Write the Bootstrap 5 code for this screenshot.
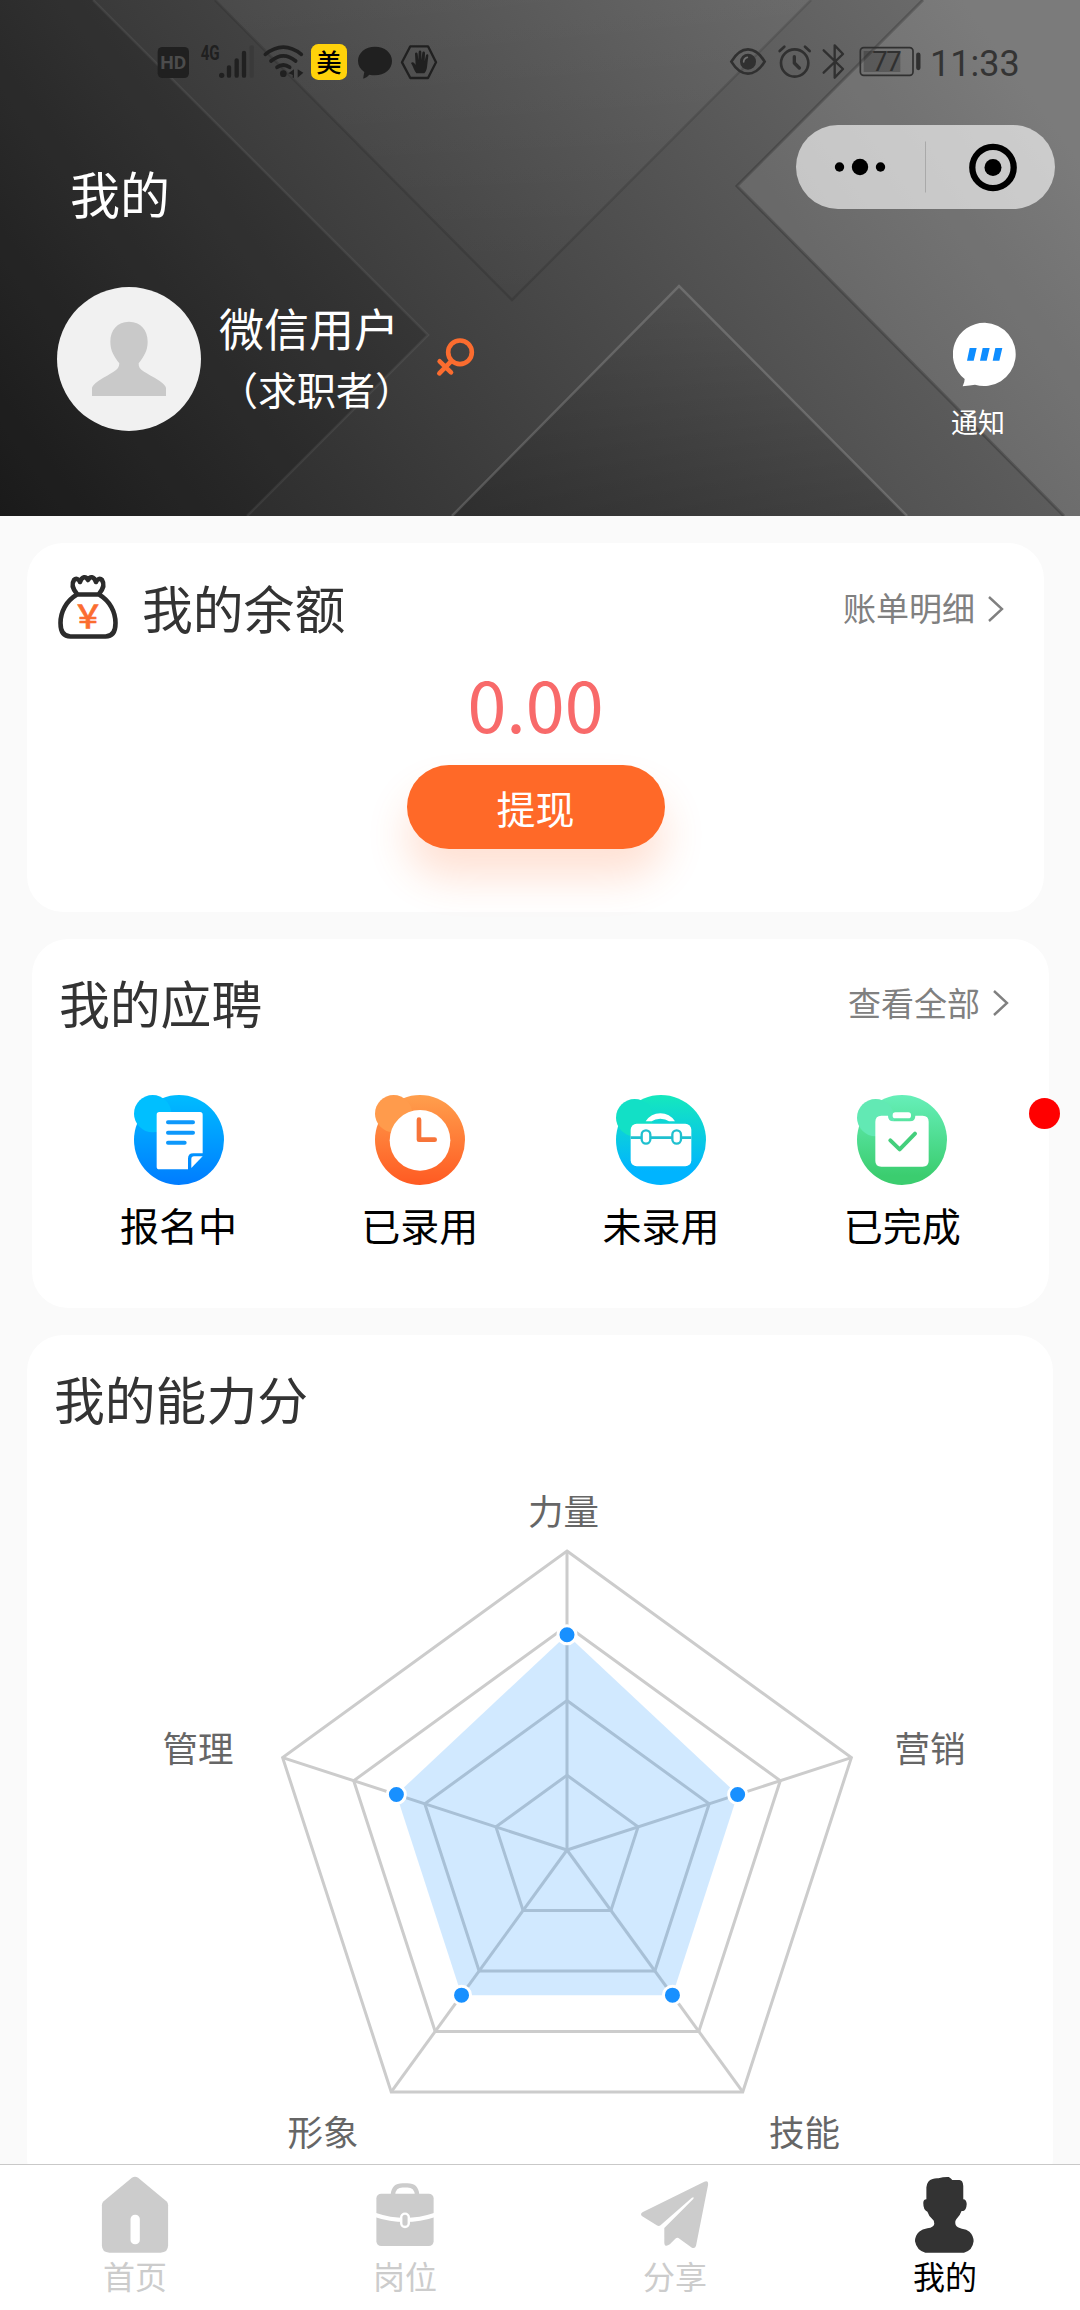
<!DOCTYPE html>
<html lang="zh-CN">
<head>
<meta charset="utf-8">
<meta name="viewport" content="width=device-width, initial-scale=1">
<title>我的</title>
<link href="https://cdn.jsdelivr.net/npm/bootstrap@5.3.0/dist/css/bootstrap.min.css" rel="stylesheet">
<style>
  body{font-family:"Noto Sans CJK SC",sans-serif;background:#fafafa;line-height:1;color:#333}
  svg{display:block;flex:none}
  .screen{height:2310px}
  .hero{height:516px;color:#fff;background:#444}
  .hero-bg{z-index:0}
  .hero-in{z-index:1}
  .status{height:100px;padding:30px 0 0 140px}
  .clock{font:36px/1 Roboto,sans-serif;color:#343434;margin:16px 0 0 0;width:150px}
  .topline{height:187px;padding:25px 25px 0 70px}
  .page-name{font-size:50px;padding-top:42px}
  .capsule{width:259px;height:84px;background:rgba(255,255,255,.62)}
  .profile{padding:0 62px 0 57px;height:144px}
  .user{margin-left:18px;padding-top:18px}
  .nick{font-size:45px}
  .role{font-size:39px;margin-top:19px}
  .sex{margin:49px 0 0 21px}
  .notice{padding-top:35px;font-size:27px}
  .notice svg{margin-right:-1px}
  .notice span{margin-top:20px;margin-right:13px}
  .panel{background:#fff;border:0;border-radius:36px;height:369px}
  .p-balance{margin:27px 36px 0 27px;padding:30px 40px 0 29px}
  .p-apply{margin:27px 31px 0 32px;padding:38px 40px 0 27px}
  .p-score{margin:27px 27px 0 27px;padding:38px 0 0 27px;height:860px}
  .heading{font-size:50.8px;color:#333}
  .p-balance .heading{margin:-2px 0 0 22px}
  .more{font-size:33px;color:#808080}
  .p-balance .more{margin-top:-2px}
  .chev{margin:1px 0 0 12px}
  .amount{font-size:70px;color:#f86a6a;margin-top:25px}
  .draw{width:258px;height:84px;font-size:39px;line-height:83px;background:#ff6928;color:#fff;border:0;margin-top:27px;padding:0;box-shadow:0 28px 42px rgba(255,105,40,.2)}
  .draw:hover{background:#ff6928;color:#fff}
  .states{margin:67px -14px 0 -1px;font-size:39px;color:#000}
  .states span{margin-top:20px}
  .dot{width:31px;height:31px;background:#f00;right:-11px;top:159px}
  .radar{font-size:35.5px;fill:#666;margin:34px 0 0 -27px}
  .tabs{height:146px;background:#fff;border-top:1px solid #c9c9c9;font-size:32px;color:#ccc;z-index:2}
  .tabs a{color:#ccc;padding-top:11px}
  .tabs a span{margin-top:3px}
  .tabs a.on{color:#000}
</style>
</head>
<body>
<div class="screen d-flex flex-column overflow-hidden position-relative">
  <header class="hero position-relative flex-shrink-0">
    <svg class="hero-bg position-absolute top-0 start-0" width="1080" height="516" viewBox="0 0 1080 516">
      <defs>
        <linearGradient id="g0" gradientUnits="userSpaceOnUse" x1="0" y1="516" x2="876" y2="-120"><stop offset="0" stop-color="#1f1f1f"/><stop offset="1" stop-color="#6c6c6c"/></linearGradient>
        <linearGradient id="g3" gradientUnits="userSpaceOnUse" x1="0" y1="516" x2="0" y2="286"><stop offset="0" stop-color="#000" stop-opacity=".2"/><stop offset="1" stop-color="#000" stop-opacity="0"/></linearGradient>
        <linearGradient id="g4" gradientUnits="userSpaceOnUse" x1="0" y1="0" x2="0" y2="300"><stop offset="0" stop-color="#fff" stop-opacity=".05"/><stop offset="1" stop-color="#fff" stop-opacity="0"/></linearGradient>
      </defs>
      <path fill="url(#g0)" d="M0 0H1080V516H0z"/>
      <path fill="#000" fill-opacity=".14" d="M0 0H93L428 335 247 516H0z"/>
      <path fill="url(#g4)" d="M215 0L512 300 811 0z"/>
      <path fill="url(#g3)" d="M452 516L679 286 907 516z"/>
      <path fill="#fff" fill-opacity=".1" d="M923 0L737 186 1064 516H1080V0z"/>
      <g fill="none" stroke-width="2.500">
        <path stroke="#fff" stroke-opacity=".07" d="M93 0L428 335 247 516"/>
        <path stroke="#000" stroke-opacity=".12" d="M215 0L512 300 811 0"/>
        <path stroke="#000" stroke-opacity=".2" stroke-width="3" d="M923 0L737 186 1064 516"/>
        <path stroke="#fff" stroke-opacity=".17" d="M452 516L679 286 907 516"/>
      </g>
    </svg>
    <div class="hero-in position-relative">
      <div class="status d-flex">
        <svg width="320" height="70" viewBox="0 0 960 210" fill="#202020">
          <rect x="53" y="51" width="94" height="93" rx="14"/>
          <text x="100" y="118" font-family="Roboto" font-weight="700" font-size="56" text-anchor="middle" fill="#4c4c4c" textLength="78" lengthAdjust="spacingAndGlyphs">HD</text>
          <text x="182" y="89" font-family="Roboto" font-weight="700" font-size="58" textLength="57" lengthAdjust="spacingAndGlyphs">4G</text>
          <circle cx="245" cy="136" r="8"/>
          <g stroke="#202020" stroke-width="13" stroke-linecap="round" fill="none">
            <path d="M267 112V137M290 91V137M312 69V137"/><path stroke="#3a3a3a" d="M335 52V137"/>
            <path stroke-width="11" d="M376 73Q430 30 484 73M393 93Q430 62 467 93M411 112Q430 98 449 112"/>
          </g>
          <circle cx="430" cy="131" r="10"/><path d="M462 118v25h-4v-8l-13-5zM473 118v25l17-15z"/>
          <rect x="513" y="42" width="108" height="108" rx="22" fill="#ffd20a"/>
          <text x="567" y="125" font-family="Noto Sans CJK SC" font-weight="500" font-size="76" text-anchor="middle" fill="#000">美</text>
          <path d="M705 50c29 0 51 18 51 43s-22 43-51 43q-9 0-17-2-7 9-18 12-1-2 3-20c-12-8-19-19-19-33 0-25 22-43 51-43z"/>
          <path fill="none" stroke="#202020" stroke-width="7" stroke-linejoin="round" d="M811 49h53l24 48-24 47h-53l-25-47z"/>
          <path d="M829 130c-7-8-9-20-16-31 6-6 11 1 14 6l-2-33c0-6 7-6 8 0l2 19 1-25c1-6 7-6 8 0v25l3-23c1-5 8-5 8 1l-1 25 4-18c2-5 7-4 7 1l-4 35c-1 9-5 15-8 18z"/>
        </svg>
        <svg class="ms-auto me-0" width="220" height="70" viewBox="0 0 660 210" fill="none" stroke="#303030">
          <path stroke-width="8" d="M64 95Q86 58 114 58T164 95Q142 131 114 131T64 95z"/>
          <circle cx="114" cy="95" r="24" fill="#303030" stroke="none"/><path stroke="#707070" stroke-width="5" stroke-linecap="round" d="M101 96q0-11 11-14"/>
          <circle cx="254" cy="99" r="41" stroke-width="8"/>
          <path stroke-width="8" stroke-linecap="round" d="M209 63l14-13M299 63l-14-13"/><path stroke-width="10" stroke-linecap="round" stroke-linejoin="round" d="M253 80v19l15 15"/>
          <path stroke-width="7" stroke-linejoin="round" stroke-linecap="round" d="M341 61l58 56-25 26V46l25 26-58 56"/>
          <rect x="451" y="53" width="158" height="83" rx="10" stroke-width="5"/>
          <path fill="#000" fill-opacity=".22" stroke="none" d="M461 63h110v63H461z"/>
          <text x="531" y="124" fill="#303030" stroke="none" font-family="Roboto" font-size="82" text-anchor="middle" textLength="88">77</text>
          <path stroke-width="13" stroke-linecap="round" d="M625 74v40"/>
        </svg>
        <div class="clock">11:33</div>
      </div>
      <div class="topline d-flex justify-content-between align-items-start">
        <div class="page-name">我的</div>
        <div class="capsule rounded-pill">
          <svg width="259" height="84" viewBox="0 0 259 84">
            <circle cx="43.500" cy="42" r="4.700"/><circle cx="64" cy="42" r="8.200"/><circle cx="84.500" cy="42" r="4.700"/>
            <path stroke="#a9a9a9" d="M129.500 16.500v51"/>
            <circle cx="197" cy="42.500" r="20.700" fill="none" stroke="#000" stroke-width="6.300"/><circle cx="197" cy="42.500" r="8.500"/>
          </svg>
        </div>
      </div>
      <div class="profile d-flex align-items-start">
        <svg width="144" height="144" viewBox="81 51 432 432">
          <circle cx="297" cy="267" r="216" fill="#f1f1f1"/>
          <path fill="#c9c9c9" d="M297 155c35 0 56 25 56 60 0 28-12 45-27 65-2 22 22 27 62 52q20 14 20 22v24H186v-24q0-8 20-22c40-25 62-30 62-52-15-20-27-37-27-65 0-35 21-60 56-60z"/>
        </svg>
        <div class="user d-flex flex-column">
          <span class="nick">微信用户</span><span class="role">（求职者）</span>
        </div>
        <svg class="sex" width="42" height="42" viewBox="1215 200 126 126" fill="none" stroke="#fb6c2f" stroke-width="14" stroke-linecap="round">
          <circle cx="1290" cy="249" r="35.500"/><path d="M1263 276l-35 36M1229 276l34 33"/>
        </svg>
        <div class="notice ms-auto d-flex flex-column align-items-center">
          <svg width="64" height="66" viewBox="161 66 192 198">
            <path fill="#fff" d="M257 68a95 95 0 1 1-30 186q-14 2-37 5 6-12 6-22A95 95 0 0 1 257 68z"/>
            <path fill="#0e8dff" d="M211 144h21l-9 38h-20zM250 144h21l-9 38h-20zM288 144h21l-9 38h-20z"/>
          </svg>
          <span>通知</span>
        </div>
      </div>
    </div>
  </header>

  <section class="card panel p-balance flex-shrink-0">
    <div class="d-flex align-items-center">
      <svg width="64" height="70" viewBox="56 572 64 70" fill="none" stroke="#2b2b2b" stroke-width="4.600" stroke-linejoin="round">
        <path d="M77 593.500C66 600 60.500 611 60.500 622c0 9 3 13.500 10 13.500h35c7 0 10-4.500 10-13.500 0-11-5.500-22-16.500-28.500z"/>
        <path d="M77 593c-5-6-5-11-3-14 2-2 5-1 6 2 2-6 6-6 8-2 2-4 6-4 8 2 1-3 4-4 6-2 2 3 2 8-3 14"/>
        <text x="88" y="627" font-family="Noto Sans CJK SC" font-weight="500" font-size="32" text-anchor="middle" fill="#fb6c2f" stroke="#fb6c2f" stroke-width=".6">￥</text>
      </svg>
      <span class="heading">我的余额</span>
      <span class="more ms-auto">账单明细</span>
      <svg class="chev" width="17" height="28" viewBox="0 0 17 28" fill="none" stroke="#808080" stroke-width="2.400"><path d="M2 2l13 12L2 26"/></svg>
    </div>
    <div class="d-flex flex-column align-items-center" style="margin-left:11px">
      <div class="amount">0.00</div>
      <button class="btn draw rounded-pill" type="button">提现</button>
    </div>
  </section>

  <section class="card panel p-apply flex-shrink-0">
    <div class="d-flex align-items-center">
      <span class="heading">我的应聘</span>
      <span class="more ms-auto">查看全部</span>
      <svg class="chev" width="17" height="28" viewBox="0 0 17 28" fill="none" stroke="#808080" stroke-width="2.400"><path d="M2 2l13 12L2 26"/></svg>
    </div>
    <div class="states row g-0 text-center">
      <div class="col d-flex flex-column align-items-center">
        <svg width="90" height="90" viewBox="102 74 270 270">
          <defs><linearGradient id="a1" x2="0" y2="1"><stop offset="0" stop-color="#00bcff"/><stop offset="1" stop-color="#007cff"/></linearGradient></defs>
          <circle cx="237" cy="209" r="135" fill="url(#a1)"/><circle cx="158" cy="130" r="56" fill="#00bfff"/>
          <path fill="#fff" d="M178 125h122q8 0 8 8v116h-28q-16 0-16 16v32h-86q-8 0-8-8V133q0-8 8-8z"/>
          <path fill="#fff" d="M308 258l-34 35v-27q0-8 8-8z"/>
          <path stroke="#0d98fb" stroke-width="12" stroke-linecap="round" d="M204 156h75M204 187h75M204 217h50"/>
        </svg><span>报名中</span>
      </div>
      <div class="col d-flex flex-column align-items-center">
        <svg width="90" height="90" viewBox="825 74 270 270">
          <defs><linearGradient id="a2" x2="0" y2="1"><stop offset="0" stop-color="#ff9f4d"/><stop offset="1" stop-color="#ff5a22"/></linearGradient></defs>
          <circle cx="960" cy="209" r="135" fill="url(#a2)"/><circle cx="881" cy="130" r="56" fill="#ff9b4c"/>
          <circle cx="960" cy="210" r="91" fill="#fff"/>
          <path fill="none" stroke="#f77439" stroke-width="14" stroke-linecap="round" stroke-linejoin="round" d="M957 148v60h47"/>
        </svg><span>已录用</span>
      </div>
      <div class="col d-flex flex-column align-items-center">
        <svg width="90" height="90" viewBox="105 74 270 270">
          <defs><linearGradient id="a3" x2="0" y2="1"><stop offset="0" stop-color="#15e8bd"/><stop offset=".85" stop-color="#00b4ff"/></linearGradient></defs>
          <circle cx="240" cy="209" r="135" fill="url(#a3)"/><circle cx="161" cy="142" r="56" fill="#12e0c6"/>
          <path fill="#fff" d="M194 153q16-24 44-24t44 24h-18q-10-8-26-8t-26 8z"/>
          <rect x="149" y="160" width="182" height="128" rx="18" fill="#fff"/>
          <path stroke="#1fc0cf" stroke-width="8" d="M149 202h182"/>
          <g fill="#fff" stroke="#1fc0cf" stroke-width="7"><rect x="182" y="180" width="26" height="40" rx="13"/><rect x="274" y="180" width="26" height="40" rx="13"/></g>
        </svg><span>未录用</span>
      </div>
      <div class="col d-flex flex-column align-items-center">
        <svg width="90" height="90" viewBox="828 74 270 270">
          <defs><linearGradient id="a4" x2="0" y2="1"><stop offset="0" stop-color="#66efb9"/><stop offset=".9" stop-color="#3bcd6f"/></linearGradient></defs>
          <circle cx="963" cy="209" r="135" fill="url(#a4)"/><circle cx="884" cy="142" r="56" fill="#62e9b4"/>
          <path fill="#fff" d="M901 136h20q0 17 16 17h50q16 0 16-17h22q18 0 18 18v118q0 17-18 17H901q-18 0-18-17V154q0-18 18-18z"/>
          <rect x="935" y="126" width="55" height="18" rx="8" fill="#fff"/>
          <path fill="none" stroke="#44cf7c" stroke-width="12" stroke-linecap="round" stroke-linejoin="round" d="M928 210l28 27 46-47"/>
        </svg><span>已完成</span>
      </div>
    </div>
    <i class="dot position-absolute rounded-circle"></i>
  </section>

  <section class="card panel p-score flex-shrink-0">
    <span class="heading">我的能力分</span>
    <svg class="radar" width="1026" height="700" viewBox="27 1458 1026 700">
      <g id="web" fill="none" stroke="#ccc" stroke-width="3"></g>
      <polygon id="area" fill="#1890ff" fill-opacity=".2"/>
      <g id="pts" fill="#1890ff" stroke="#fff" stroke-width="3"></g>
      <g text-anchor="middle">
        <text x="563.500" y="1525">力量</text><text x="198" y="1762">管理</text><text x="930" y="1762">营销</text>
        <text x="323" y="2146">形象</text><text x="804.500" y="2146">技能</text>
      </g>
    </svg>
  </section>

  <nav class="tabs position-absolute bottom-0 start-0 w-100 d-flex">
    <a class="col-3 d-flex flex-column align-items-center text-decoration-none">
      <svg width="80" height="80" viewBox="276 79 232 240" preserveAspectRatio="none"><path fill="#ccc" d="M383 84q9-6 18 0l82 71q5 5 5 12v120q0 22-22 22H318q-22 0-22-22V167q0-7 5-12z"/><rect x="379" y="195" width="27" height="89" rx="13" fill="#fff"/></svg><span>首页</span></a>
    <a class="col-3 d-flex flex-column align-items-center text-decoration-none">
      <svg width="80" height="80" viewBox="1060 79 232 240" preserveAspectRatio="none"><path fill="none" stroke="#ccc" stroke-width="13" d="M1141 135q2-28 28-28h14q26 0 28 28"/><rect x="1093" y="132" width="166" height="157" rx="14" fill="#ccc"/><path fill="none" stroke="#fff" stroke-width="12" d="M1090 196q86 30 172 0"/><rect x="1165" y="192" width="22" height="40" rx="11" fill="#ccc" stroke="#fff" stroke-width="7"/></svg><span>岗位</span></a>
    <a class="col-3 d-flex flex-column align-items-center text-decoration-none">
      <svg width="80" height="80" viewBox="276 79 232 240" preserveAspectRatio="none" fill="#ccc"><path d="M477 96q12-5 11 9l-35 183q-3 10-12 6l-36-27q-6-5-12 0l-16 17q-15 11-16-5v-44l84-87q4-7-4-4l-91 83q-5 4-11 0l-42-27q-8-7 2-13z"/></svg><span>分享</span></a>
    <a class="on col-3 d-flex flex-column align-items-center text-decoration-none">
      <svg width="80" height="80" viewBox="1060 79 232 240" preserveAspectRatio="none"><path fill="#333" d="M1140 88q8-3 17-2 16-5 30-4 7 4 10 9h21q10 0 11 18v40q9 0 10 14-1 18-10 21h-5q-4 12-13 22-8 8-4 20 4 8 18 11 14 2 22 9 12 12 12 29-3 28-28 34h-112q-25-6-30-34 0-18 12-29 9-8 24-10 20-4 20-14 0-10-6-14-10-9-14-22-12-4-12-26 0-10 9-11v-36q2-21 18-25z"/></svg><span>我的</span></a>
  </nav>
</div>
<script src="https://cdn.jsdelivr.net/npm/bootstrap@5.3.0/dist/js/bootstrap.bundle.min.js"></script>
<script>
  const cx = 567, cy = 1850, R = 299;
  const at = (i, k) => { const a = -Math.PI / 2 + i * Math.PI * 2 / 5; return [cx + R * k * Math.cos(a), cy + R * k * Math.sin(a)]; };
  let web = '';
  for (const k of [.25, .5, .75, 1]) web += `<polygon points="${[0,1,2,3,4].map(i => at(i, k)).join(' ')}"/>`;
  for (let i = 0; i < 5; i++) web += `<path d="M${cx} ${cy}L${at(i, 1)}"/>`;
  document.getElementById('web').innerHTML = web;
  const scores = [.72, .6, .6, .6, .6].map((k, i) => at(i, k));
  document.getElementById('area').setAttribute('points', scores.join(' '));
  document.getElementById('pts').innerHTML = scores.map(p => `<circle cx="${p[0]}" cy="${p[1]}" r="9"/>`).join('');
</script>
</body>
</html>
